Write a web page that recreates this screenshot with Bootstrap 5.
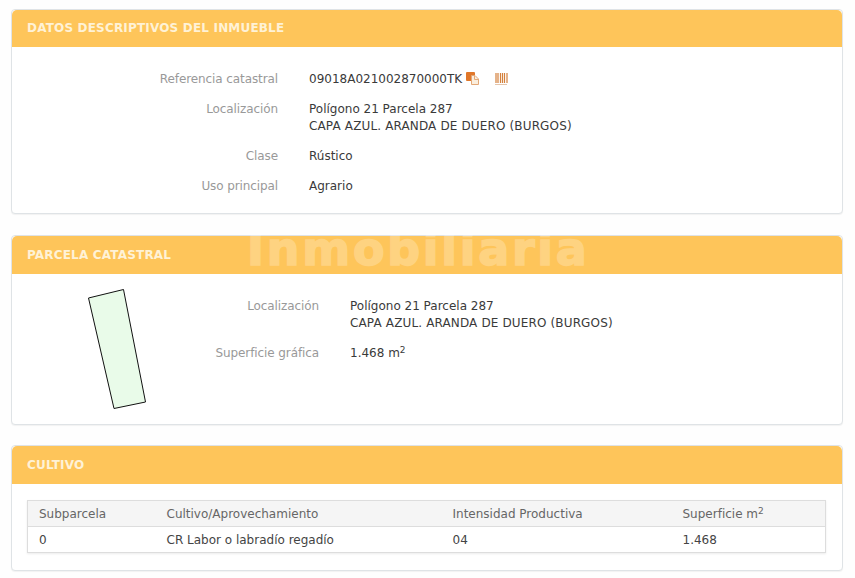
<!DOCTYPE html>
<html lang="es">
<head>
    <meta charset="UTF-8">
    <meta name="viewport" content="width=device-width, initial-scale=1.0">
    <title>Datos del inmueble</title>
    <link href="https://cdn.jsdelivr.net/npm/bootstrap@5.3.0/dist/css/bootstrap.min.css" rel="stylesheet">
    <style>
        body {
            background: #fefefe;
            font-family: "DejaVu Sans", Verdana, sans-serif;
            font-size: 12px;
            line-height: 17px;
            color: #3a3a3a;
            padding: 9px 12px 0 11px;
            overflow: hidden;
        }
        .ficha {
            position: relative;
            margin-bottom: 20px;
            border: 1px solid #dfe3e6;
            border-radius: 4px;
            box-shadow: 0 1px 1px rgba(0, 0, 0, .05);
        }
        .ficha-cab {
            height: 38px;
            padding: 11px 15px 0;
            background: #fec55a;
            border: 0;
            border-radius: 3px 3px 0 0;
            color: #fff2d6;
            font-size: 12px;
            font-weight: 700;
            letter-spacing: .18px;
            white-space: nowrap;
        }
        .ficha-datos { height: 205px; margin-bottom: 21px; }
        .ficha-datos .ficha-cab { height: 37px; padding-top: 10px; }
        .ficha-cuerpo { padding: 24px 0 0; }
        .fila-dato { display: flex; gap: 31px; margin-bottom: 13px; }
        .etiqueta { flex: 0 0 266px; text-align: right; color: #999; letter-spacing: -.1px; }
        .linea-mayus { letter-spacing: .14px; }
        .ficha-parcela { height: 190px; }
        .ficha-parcela .etiqueta { flex-basis: 307px; }
        .plano { position: absolute; left: 0; top: 38px; }
        .marca-agua {
            position: absolute;
            left: 235px;
            top: -12px;
            font-family: "DejaVu Sans", sans-serif;
            font-size: 46px;
            line-height: 50px;
            font-weight: 700;
            letter-spacing: 2.7px;
            color: #fff;
            -webkit-text-stroke: 1.5px #fff;
            opacity: .24;
            white-space: nowrap;
            pointer-events: none;
        }
        .icono-ref { margin-left: 4px; vertical-align: -2px; }
        .icono-barras { margin-left: 16px; }
        .cuerpo-tabla { padding: 16px 15px 17px; }
        .tabla-cultivo {
            table-layout: fixed;
            width: 799px;
            margin: 0;
            font-size: 12px;
            color: #444;
            border: 1px solid #ddd;
            box-shadow: 0 1px 2px rgba(0, 0, 0, .08);
        }
        .tabla-cultivo th, .tabla-cultivo td {
            padding: 5px 10px 3px 11px;
            line-height: 17px;
            font-weight: 400;
            border: 0;
        }
        .tabla-cultivo th {
            background: #f5f5f5;
            color: #666;
            border-bottom: 1px solid #ddd;
        }
        .tabla-cultivo sup { font-size: 9px; }
        sup { top: -.4em; }
    </style>
</head>
<body>
    <div class="card ficha ficha-datos">
        <div class="card-header ficha-cab">DATOS DESCRIPTIVOS DEL INMUEBLE</div>
        <div class="ficha-cuerpo">
            <div class="fila-dato">
                <div class="etiqueta">Referencia catastral</div>
                <div>09018A021002870000TK<svg class="icono-ref" width="13" height="13" viewBox="0 0 13 13"><rect x="0" y="0" width="9" height="9" rx="1" fill="#e0772a"/><path d="M5.500 3.500h3.500l3.500 3.500v5.500h-7z" fill="#fbeedd" stroke="#e3a878"/><path d="M8.500 3.500v4h4" fill="none" stroke="#e3a878"/></svg><svg class="icono-ref icono-barras" width="13" height="12" viewBox="0 0 13 12"><path d="M1 0v10M3 0v10M5.500 0v10M7.500 0v10M9.500 0v10M12 0v10" stroke="#d4803c" stroke-width="1.200"/><path d="M.5 11.500h12" stroke="#c98a58" stroke-dasharray="1 1"/></svg></div>
            </div>
            <div class="fila-dato">
                <div class="etiqueta">Localización</div>
                <div>Polígono 21 Parcela 287<br><span class="linea-mayus">CAPA AZUL. ARANDA DE DUERO (BURGOS)</span></div>
            </div>
            <div class="fila-dato">
                <div class="etiqueta">Clase</div>
                <div>Rústico</div>
            </div>
            <div class="fila-dato">
                <div class="etiqueta">Uso principal</div>
                <div>Agrario</div>
            </div>
        </div>
    </div>

    <div class="card ficha ficha-parcela">
        <div class="card-header ficha-cab">PARCELA CATASTRAL</div>
        <div class="ficha-cuerpo">
            <svg class="plano" width="200" height="140" viewBox="12 274 200 140">
                <polygon points="88.500,298 123.500,289.500 145.500,402 114,408.500" fill="#e9fbe9" stroke="#111" stroke-width="1"/>
            </svg>
            <div class="fila-dato">
                <div class="etiqueta">Localización</div>
                <div>Polígono 21 Parcela 287<br><span class="linea-mayus">CAPA AZUL. ARANDA DE DUERO (BURGOS)</span></div>
            </div>
            <div class="fila-dato">
                <div class="etiqueta">Superficie gráfica</div>
                <div>1.468 m<sup>2</sup></div>
            </div>
        </div>
        <div class="marca-agua">Inmobiliaria</div>
    </div>

    <div class="card ficha">
        <div class="card-header ficha-cab">CULTIVO</div>
        <div class="cuerpo-tabla">
            <table class="table tabla-cultivo">
                <colgroup><col style="width:128px"><col style="width:286px"><col style="width:230px"><col></colgroup>
                <thead>
                    <tr><th>Subparcela</th><th>Cultivo/Aprovechamiento</th><th>Intensidad Productiva</th><th>Superficie m<sup>2</sup></th></tr>
                </thead>
                <tbody>
                    <tr><td>0</td><td>CR Labor o labradío regadío</td><td>04</td><td>1.468</td></tr>
                </tbody>
            </table>
        </div>
    </div>
    <script src="https://cdn.jsdelivr.net/npm/bootstrap@5.3.0/dist/js/bootstrap.bundle.min.js"></script>
</body>
</html>
